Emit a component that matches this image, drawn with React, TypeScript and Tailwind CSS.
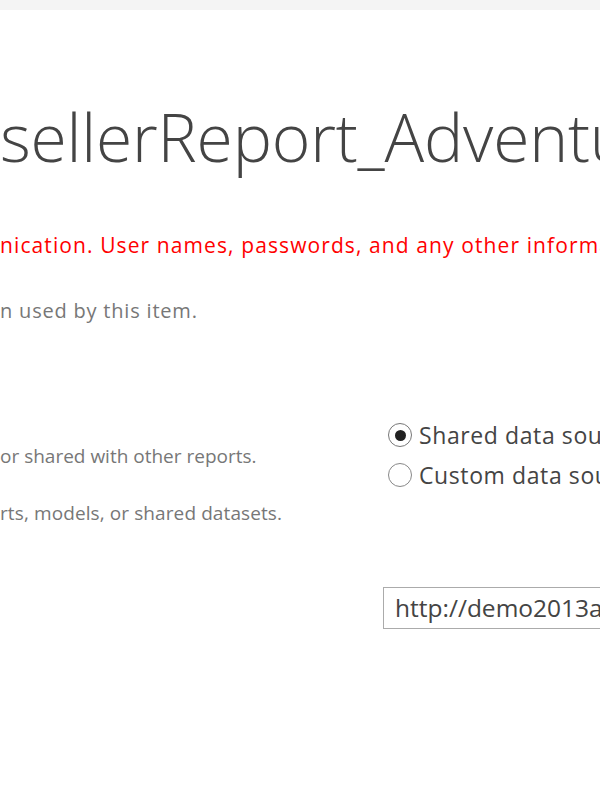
import React from "react";

export default function App() {
  const font = { fontFamily: '"Open Sans", "Noto Sans", sans-serif' };
  return (
    <div className="w-[600px] h-[800px] overflow-hidden bg-white" style={font}>
      <div className="h-[10px] bg-[#f4f4f4]" />
      <h1 className="mt-[93px] whitespace-nowrap text-[66px] leading-[66px] font-light text-[#444] tracking-[-0.2px]">
        sellerReport_AdventureWorks
      </h1>
      <p className="mt-[62px] whitespace-nowrap text-[21px] leading-[28px] tracking-[1.1px] text-[#ff0000]">
        nication. User names, passwords, and any other information will be sent
      </p>
      <p className="mt-[40px] whitespace-nowrap text-[20px] leading-[24px] tracking-[0.8px] text-[#777]">
        n used by this item.
      </p>
      <div className="mt-[92px] flex">
        <div className="w-[383px] shrink-0 pt-[29px]">
          <p className="whitespace-nowrap text-[19px] leading-[24px] text-[#777]">
            or shared with other reports.
          </p>
          <p className="mt-[33px] whitespace-nowrap text-[19px] leading-[24px] tracking-[0.1px] text-[#777]">
            rts, models, or shared datasets.
          </p>
        </div>
        <div className="flex-1 min-w-0">
          <div className="pl-[5px]">
            <label className="flex h-[40px] items-center gap-[7px] whitespace-nowrap text-[23px] tracking-[0.6px] text-[#444]">
              <span className="flex h-[24px] w-[24px] shrink-0 items-center justify-center rounded-full border border-[#777] bg-white">
                <span className="h-[11px] w-[11px] rounded-full bg-[#222]" />
              </span>
              Shared data source
            </label>
            <label className="flex h-[40px] items-center gap-[7px] whitespace-nowrap text-[23px] tracking-[0.6px] text-[#444]">
              <span className="h-[24px] w-[24px] shrink-0 rounded-full border border-[#888] bg-white" />
              Custom data source
            </label>
          </div>
          <div className="mt-[92px] flex h-[42px] w-[400px] items-center border border-[#ababab] pl-[11px] whitespace-nowrap text-[24.5px] text-[#444]">
            http://demo2013a/ReportServer
          </div>
        </div>
      </div>
    </div>
  );
}
